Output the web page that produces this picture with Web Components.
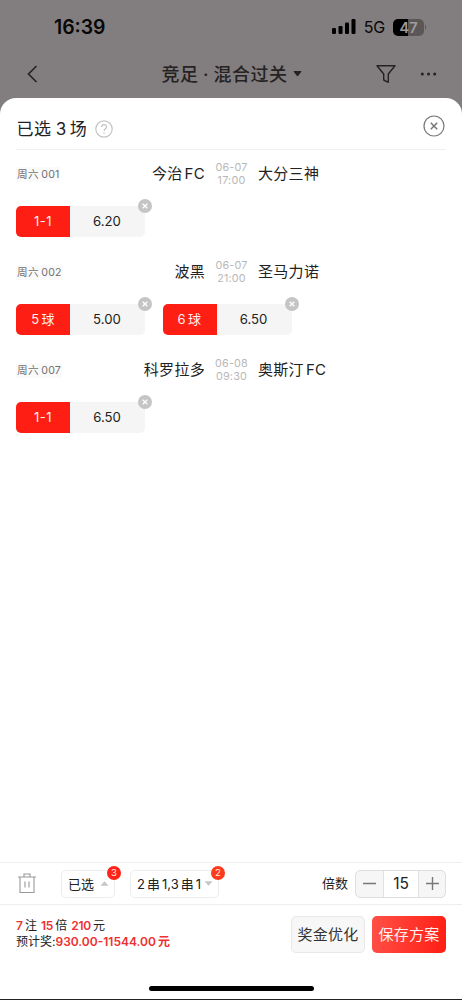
<!DOCTYPE html>
<html lang="zh-CN">
<head>
<meta charset="utf-8">
<title>混合过关</title>
<style>
html,body{margin:0;height:100%}
body{font-family:Inter,"Noto Sans CJK SC",sans-serif;color:#222;background:#fff;overflow:hidden;text-autospace:no-autospace}
</style>
</head>
<body>
<bet-app></bet-app>
<script>
const define = (name, html, init) => customElements.define(name, class extends HTMLElement {
  constructor() {
    super();
    const t = document.createElement('template');
    t.innerHTML = '<style>*{box-sizing:border-box}svg{display:block;flex:none}</style>' + html;
    this.attachShadow({mode: 'open'}).append(t.content.cloneNode(true));
  }
  connectedCallback() { if (init) init.call(this, this.shadowRoot); }
});

define('status-bar', `<style>
:host{display:flex;height:54px;align-items:center;padding:0 35px 0 54px;color:#080707}
.time{font-size:19.4px;font-weight:600;letter-spacing:0;line-height:54px;flex:1}
.net{font-size:16px;margin:0 8px 0 8px;letter-spacing:-.2px;line-height:55px}
.bat{width:31px;height:17px;border-radius:5px;background:linear-gradient(90deg,#000 0 15px,#5b5757 15px);color:#a09c9c;font-size:14.5px;font-weight:600;line-height:17px;text-align:center;letter-spacing:0}
</style><span class="time">16:39</span>
<svg width="24" height="16" viewBox="0 0 24 16"><rect x="0" y="9" width="4" height="6" rx="1.2"/><rect x="6.5" y="7" width="4" height="8" rx="1.2"/><rect x="13" y="3.5" width="4" height="11.5" rx="1.2"/><rect x="19.5" y="0" width="4" height="15" rx="1.2"/></svg>
<span class="net">5G</span><span class="bat">47</span>
<svg width="3" height="6" viewBox="0 0 3 6"><path d="M1 .5q2.5 2.5 0 5z" fill="#5b5757"/></svg>`);

define('nav-bar', `<style>
:host{display:grid;grid-template-columns:1fr auto 1fr;height:44px;align-items:center;padding:0 25px;margin-top:-2px;color:#252222}
.title{display:flex;align-items:center;font-size:18px;font-weight:500;letter-spacing:.5px;line-height:40px;padding:2px 0 0 1px;white-space:pre}
.title svg{margin:-2px 0 0 5px}
.right{display:flex;justify-content:flex-end;align-items:center;gap:24px}
</style><svg width="14" height="20" viewBox="0 0 14 20" fill="none" stroke="currentColor" stroke-width="1.6"><path d="M11.5 2 3.5 10l8 8"/></svg>
<div class="title">竞足<span style="width:15px;text-align:center">·</span>混合过关<svg width="9" height="6" viewBox="0 0 9 6"><path d="M1 .5h7L4.5 5z" fill="currentColor" stroke="currentColor" stroke-linejoin="round"/></svg></div>
<div class="right"><svg width="20" height="20" viewBox="0 0 20 20" fill="none" stroke="currentColor" stroke-width="1.4" stroke-linejoin="round"><path d="M1 1.7h18L12.3 10v8.3L7.7 16v-6z"/></svg>
<svg width="17" height="4" viewBox="0 0 17 4" fill="currentColor"><circle cx="2.3" cy="2" r="1.5"/><circle cx="8.5" cy="2" r="1.5"/><circle cx="14.7" cy="2" r="1.5"/></svg></div>`);

define('sheet-header', `<style>
:host{display:flex;height:52px;margin:0 16px;padding-top:5px;align-items:center;border-bottom:1px solid #f0f0f0;font-size:17px}
.t{letter-spacing:.6px;line-height:40px;padding:6px 0 0 .5px}
.n{margin:0 3px 0 4px}
.q{margin:5px auto 0 7.5px}
</style><span class="t">已选<span class="n">3</span>场</span>
<svg class="q" width="18" height="18" viewBox="0 0 18 18" fill="none" stroke="#c4c4c4" stroke-width="1.2"><circle cx="9" cy="9" r="8.2"/><path d="M6.6 7.1c0-3.2 4.9-3.1 4.9-.2 0 1.8-2.4 1.8-2.4 4M9.1 12.4v1.4"/></svg>
<svg width="24" height="24" viewBox="0 0 24 24" fill="none" stroke="#777"><circle cx="12" cy="12" r="10" stroke-width="1.2"/><path d="M8.8 8.8l6.4 6.4M15.2 8.8l-6.4 6.4" stroke-width="1.5"/></svg>`);

define('odds-chip', `<style>
:host{display:flex;position:relative;width:129px;height:31.5px;line-height:31px;text-align:center;font-size:13.2px;letter-spacing:0}
.k{width:54px;background:#ff1e14;color:#fff1ed;border-radius:5px 0 0 5px;font-size:13px;letter-spacing:.4px}
.v{flex:1;background:#f5f5f5;border-radius:0 5px 5px 0;padding-right:1px}
svg{position:absolute;right:-7px;top:-7px}
</style><span class="k"><slot name="pick"></slot></span><span class="v"><slot></slot></span>
<svg width="14" height="14" viewBox="0 0 14 14"><circle cx="7" cy="7" r="7" fill="#c5c5c5"/><path d="M4.7 4.7l4.6 4.6M9.3 4.7 4.7 9.3" stroke="#fff" stroke-width="1.3"/></svg>`);

define('match-item', `<style>
:host{display:block;height:98.2px;padding:0 16px}
.info{display:grid;grid-template-columns:189px 53px 1fr;height:48px;align-items:center;font-size:15px;line-height:22px;white-space:nowrap;letter-spacing:.3px}
.home{display:flex;justify-content:space-between;align-items:center}
.id{font-size:10.6px;line-height:15px;color:#707070;background:#fafafa;padding:0 1px;letter-spacing:.3px}
.id i{font-style:normal;margin-left:2.5px;letter-spacing:.15px}
.time{font-size:10.8px;line-height:12.7px;color:#b8b8b8;text-align:center;letter-spacing:.2px;padding-top:1px}
.picks{display:flex;gap:17.5px;padding-top:7.5px}
</style><div class="info"><div class="home"><span class="id">周六<i></i></span><slot name="home"></slot></div><div class="time"><div id="d"></div><div id="h"></div></div><slot name="away"></slot></div>
<div class="picks"><slot></slot></div>`, function (r) {
  r.querySelector('i').textContent = this.getAttribute('no');
  r.querySelector('#d').textContent = this.getAttribute('date');
  r.querySelector('#h').textContent = this.getAttribute('hour');
});

define('drop-button', `<style>
:host{display:flex;position:relative;height:28px;border:1px solid #ededed;border-radius:5px;align-items:center;padding:0 5px 0 6px;font-size:13px;line-height:26px;white-space:nowrap;justify-content:space-between}
:host([up]) .tri{transform:rotate(180deg)}
.b{position:absolute;right:-7px;top:-5px;width:14px;height:14px;border-radius:50%;background:#ff2318;color:#ffe9e5;font-size:9.5px;line-height:14px;text-align:center}
:host([orange]) .b{background:#fc3a1c}
</style><span><slot></slot></span><svg class="tri" width="9" height="5" viewBox="0 0 9 5"><path d="M.5.3h8L4.5 4.7z" fill="#c6c6c6"/></svg><span class="b"></span>`, function (r) {
  r.querySelector('.b').textContent = this.getAttribute('count');
});

define('count-stepper', `<style>
:host{display:grid;grid-template-columns:27px 36px 27px;width:91px;height:28px;border:1px solid #dedede;border-radius:5px;overflow:hidden;background:#f6f6f6}
span{display:grid;place-items:center}
.n{background:#fff;border:solid #e2e2e2;border-width:0 1px;font-size:15.5px;line-height:26px}
</style><span><svg width="13" height="13" stroke="#777" stroke-width="1.4"><path d="M0 6.5h13"/></svg></span><span class="n"><slot></slot></span><span><svg width="13" height="13" stroke="#777" stroke-width="1.4"><path d="M0 6.5h13M6.5 0v13"/></svg></span>`);

define('tool-bar', `<style>
:host{display:flex;height:43px;border:solid #eee;border-width:1px 0;align-items:center;padding:0 16px 0 18px}
.m{margin:0 2px}
.lbl{margin:0 7px 2px auto;font-size:13px}
</style><svg width="18" height="21" viewBox="0 0 18 21" fill="none" stroke="#999" stroke-width="1.1"><path d="M0 4h18M6 4V1h6v3M2 4v15.5h14V4M7 8.5v6M11 8.5v6"/></svg>
<drop-button up count="3" style="width:54px;margin-left:25px">已选</drop-button>
<drop-button orange count="2" style="width:89px;margin-left:15px">2<span class="m">串</span>1,3<span class="m">串</span>1</drop-button>
<span class="lbl">倍数</span><count-stepper>15</count-stepper>`);

define('action-button', `<style>
:host{display:block;width:74px;height:37px;line-height:36px;text-align:center;font-size:15px;letter-spacing:.3px;border-radius:5px;border:1px solid #e8e8e8;background:#f7f7f7;color:#333;white-space:nowrap}
:host([primary]){border:0;line-height:38px;background:linear-gradient(100deg,#ff5147,#ff1d13);color:#fff0ed}
</style><slot></slot>`);

define('bet-footer', `<style>
:host{display:block;height:95px;border-bottom:1px solid #222}
.row{display:flex;height:58px;padding:0 16px;align-items:center;gap:7px}
.sum{flex:1;font-size:12px;line-height:16.5px;white-space:nowrap}
b{color:#ee3030;font-weight:600}
.home{width:165px;height:5px;border-radius:3px;background:#000;margin:22.5px auto 0}
</style><div class="row"><div class="sum"><div><b>7</b><span style="margin:0 4px 0 2px">注</span><b style="letter-spacing:-.2px">15</b><span style="margin:0 4px 0 2px">倍</span><b style="letter-spacing:-.2px">210</b><span style="margin-left:2px">元</span></div><div>预计奖:<b>930.00-11544.00<span style="margin-left:2px">元</span></b></div></div>
<action-button>奖金优化</action-button><action-button primary>保存方案</action-button></div><div class="home"></div>`);

define('bet-app', `<style>
:host{display:flex;flex-direction:column;width:462px;height:1000px;background:#827d7e}
.sheet{flex:1;display:flex;flex-direction:column;background:#fff;border-radius:16px 16px 0 0;margin-top:2px;min-height:0}
.list{flex:1;min-height:0}
.g{margin:0 2px 0 2px}
</style><status-bar></status-bar><nav-bar></nav-bar>
<div class="sheet"><sheet-header></sheet-header><div class="list">
<match-item no="001" date="06-07" hour="17:00"><span slot="home">今治<span class="g" style="margin-right:0">FC</span></span><span slot="away">大分三神</span><odds-chip><span slot="pick">1-1</span>6.20</odds-chip></match-item>
<match-item no="002" date="06-07" hour="21:00"><span slot="home">波黑</span><span slot="away">圣马力诺</span><odds-chip><span slot="pick">5<span style="margin-left:2px">球</span></span>5.00</odds-chip><odds-chip><span slot="pick">6<span style="margin-left:2px">球</span></span>6.50</odds-chip></match-item>
<match-item no="007" date="06-08" hour="09:30"><span slot="home">科罗拉多</span><span slot="away">奥斯汀<span class="g">FC</span></span><odds-chip><span slot="pick">1-1</span>6.50</odds-chip></match-item>
</div><tool-bar></tool-bar><bet-footer></bet-footer></div>`);
</script>
</body>
</html>
